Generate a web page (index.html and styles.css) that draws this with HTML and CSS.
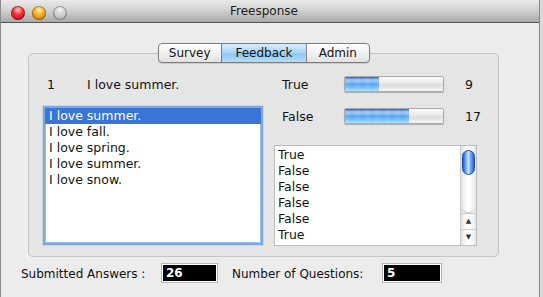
FILE: index.html
```html
<!DOCTYPE html>
<html lang="en">
<head>
    <meta charset="UTF-8">
    <title>Freesponse</title>
    <link rel="stylesheet" href="styles.css">
</head>
<body>

    <div class="window">
        <div class="titlebar">
            <div class="lights">
                <span class="light red"></span>
                <span class="light orange"></span>
                <span class="light grey"></span>
            </div>
            <div class="title">Freesponse</div>
        </div>

        <div class="content">
            <div class="panel">
                <div class="tabs">
                    <span class="tab">Survey</span>
                    <span class="tab active">Feedback</span>
                    <span class="tab">Admin</span>
                </div>

                <div class="columns">
                    <div class="col-left">
                        <div class="question">
                            <span class="qnum">1</span>
                            <span class="qtext">I love summer.</span>
                        </div>
                        <div class="listbox">
                            <div class="item selected">I love summer.</div>
                            <div class="item">I love fall.</div>
                            <div class="item">I love spring.</div>
                            <div class="item">I love summer.</div>
                            <div class="item">I love snow.</div>
                        </div>
                    </div>

                    <div class="col-right">
                        <div class="stat">
                            <span class="stat-label">True</span>
                            <div class="bar"><div class="fill" style="width: 35%"></div></div>
                            <span class="stat-num">9</span>
                        </div>
                        <div class="stat stat-second">
                            <span class="stat-label">False</span>
                            <div class="bar"><div class="fill" style="width: 65%"></div></div>
                            <span class="stat-num">17</span>
                        </div>

                        <div class="answers">
                            <div class="answer-list">
                                <div class="answer">True</div>
                                <div class="answer">False</div>
                                <div class="answer">False</div>
                                <div class="answer">False</div>
                                <div class="answer">False</div>
                                <div class="answer">True</div>
                            </div>
                            <div class="scrollbar">
                                <div class="thumb"></div>
                                <div class="track"></div>
                                <div class="arrow">&#9650;</div>
                                <div class="arrow">&#9660;</div>
                            </div>
                        </div>
                    </div>
                </div>
            </div>

            <!-- counters under the panel -->
            <div class="footer">
                <span class="foot-label first">Submitted Answers :</span>
                <span class="counter small">26</span>
                <span class="foot-label second">Number of Questions:</span>
                <span class="counter">5</span>
            </div>
        </div>
    </div>

</body>
</html>
```

FILE: styles.css
```css
body {
    margin: 0;
    background: #d9d9d9;
    font-family: "DejaVu Sans", Verdana, sans-serif;
    font-size: 12px;
    color: #111;
    overflow: hidden;
}
.window {
    width: 540px;
    height: 297px;
    background: #ececec;
    border-left: 1px solid #8a8a8a;
    border-right: 1px solid #8a8a8a;
    box-sizing: border-box;
}
/* title bar */
.titlebar {
    height: 22px;
    border-bottom: 1px solid #555;
    background: linear-gradient(#eaeaea, #cfcfcf 50%, #aaaaaa);
    display: flex;
    align-items: center;
}
.lights {
    display: flex;
    gap: 7px;
    padding: 3px 0 0 10px;
}
.light {
    width: 14px;
    height: 14px;
    border-radius: 50%;
    box-shadow: inset 0 0 0 1px rgba(0, 0, 0, 0.3);
}
.red {
    background: radial-gradient(circle at 50% 28%, #ffc8c8 0, #f0323a 40%, #b0000e 100%);
}
.orange {
    background: radial-gradient(circle at 50% 28%, #fff0b0 0, #f6ae22 42%, #c06a00 100%);
}
.grey {
    background: radial-gradient(circle at 50% 28%, #f4f4f4 0, #c8c8c8 50%, #a2a2a2 100%);
}
.title {
    flex: 1;
    text-align: center;
    margin-right: 78px;
    color: #1c1c1c;
    font-size: 12px;
}
/* main area */
.content {
    padding: 30px 0 0 27px;
}
.panel {
    width: 471px;
    height: 204px;
    box-sizing: border-box;
    border: 1px solid #c4c4c4;
    border-radius: 5px;
    background: #e5e5e5;
}
.tabs {
    display: flex;
    width: 212px;
    height: 20px;
    box-sizing: border-box;
    margin: -11px auto 0;
    border: 1px solid #7c7c7c;
    border-radius: 4px;
    overflow: hidden;
    background: linear-gradient(#ffffff, #f1f1f1 50%, #e2e2e2);
    box-shadow: 0 1px 1px rgba(0, 0, 0, 0.12);
}
.tab {
    display: flex;
    align-items: center;
    justify-content: center;
    line-height: 18px;
    width: 63px;
}
.tab.active {
    width: 85px;
    border-left: 1px solid #6d7f96;
    border-right: 1px solid #8a8a8a;
    background: linear-gradient(#d6ebfd, #a8d3f8 50%, #8cc6f6 55%, #b6ddfb);
}
.tab:last-child {
    width: 62px;
}
.columns {
    display: flex;
    gap: 11px;
    margin-top: 12px;
    padding-left: 14px;
}
/* left side */
.col-left {
    width: 220px;
}
.question {
    display: flex;
    height: 17px;
    line-height: 19px;
    font-size: 12.5px;
}
.qnum {
    width: 40px;
    padding-left: 4px;
}
.listbox {
    margin-top: 14px;
    height: 139px;
    box-sizing: border-box;
    border: 2px solid #7fa7dc;
    box-shadow: 0 0 1px #4f86cf, inset 0 0 0 1px #9fbfe6;
    background: white;
    font-size: 12.5px;
}
.item {
    height: 16px;
    line-height: 16px;
    padding-left: 4px;
}
.item.selected {
    background: #3875d7;
    color: white;
}
/* right side */
.col-right {
    width: 203px;
}
.stat {
    display: flex;
    align-items: center;
    height: 17px;
    font-size: 12.5px;
}
.stat-second {
    margin-top: 15px;
}
.stat-label {
    flex-shrink: 0;
    width: 62px;
    padding: 2px 0 0 8px;
}
.bar {
    flex-shrink: 0;
    width: 100px;
    height: 16px;
    box-sizing: border-box;
    border: 1px solid #aaaaaa;
    border-radius: 2px;
    background: linear-gradient(#fafafa, #e8e8e8 50%, #dcdcdc 55%, #f6f6f6);
    box-shadow: 0 1px 1px rgba(0, 0, 0, 0.25);
    overflow: hidden;
}
.fill {
    height: 100%;
    background:
        repeating-linear-gradient(90deg, rgba(255, 255, 255, 0.07) 0 5px, rgba(255, 255, 255, 0) 5px 10px),
        linear-gradient(#1f55c8, #8cbef0 18%, #9cc8f2 30%, #5aa2ec 50%, #7cc4f8 80%, #ade2ff);
}
.stat-num {
    flex-shrink: 0;
    margin-left: 21px;
    padding-top: 2px;
}
.answers {
    display: flex;
    margin-top: 21px;
    height: 101px;
    box-sizing: border-box;
    border: 1px solid #bdbdbd;
    background: white;
    font-size: 12.5px;
}
.answer-list {
    flex: 1;
    padding: 1px 0 0 3px;
    overflow: hidden;
}
.answer {
    height: 16px;
    line-height: 16px;
}
.scrollbar {
    width: 15px;
    display: flex;
    flex-direction: column;
    border-left: 1px solid #c8c8c8;
    background: linear-gradient(90deg, #e2e2e2, #ffffff 40%, #ffffff 60%, #e6e6e6);
}
.thumb {
    margin: 4px 1px 0;
    height: 23px;
    border-radius: 7px;
    border: 1px solid #1d4fa8;
    background: linear-gradient(90deg, #1e5bd0, #8fc2fb 35%, #c6e2ff 50%, #6aa8f5 70%, #1f5ed2);
}
.track {
    flex: 1;
    border-bottom: 1px solid #c8c8c8;
    border-radius: 0 0 7px 7px;
}
.arrow {
    height: 15px;
    line-height: 15px;
    font-size: 7px;
    text-align: center;
    color: #333;
    border-top: 1px solid #d0d0d0;
}
/* footer */
.footer {
    display: flex;
    align-items: center;
    height: 20px;
    margin: 6px 0 0 -7px;
    font-size: 12px;
}
.foot-label {
    padding-top: 2px;
}
.foot-label.first {
    width: 140px;
}
.foot-label.second {
    width: 150px;
    margin-left: 14px;
}
.counter {
    width: 60px;
    height: 20px;
    box-sizing: border-box;
    border: 1px solid #b8b8b8;
    box-shadow: inset 0 0 0 1px #fff;
    background: black;
    color: white;
    font-weight: bold;
    line-height: 18px;
    padding-left: 4px;
}
.counter.small {
    width: 57px;
}
```
